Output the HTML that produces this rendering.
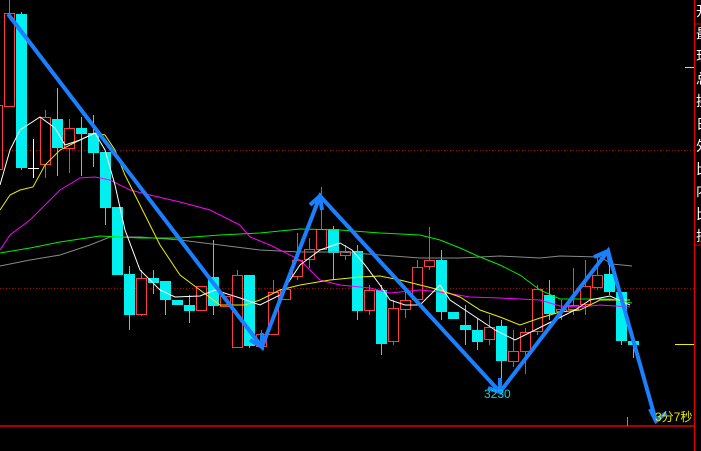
<!DOCTYPE html>
<html><head><meta charset="utf-8"><style>
html,body{margin:0;padding:0;background:#000;width:701px;height:451px;overflow:hidden}
svg{display:block}
.r{position:absolute;left:696px;width:5px;overflow:hidden;color:#fff;font:14px "Liberation Sans","Noto Sans CJK SC",sans-serif;line-height:22.5px}
</style></head><body>
<svg width="701" height="451" viewBox="0 0 701 451" xmlns="http://www.w3.org/2000/svg" style="position:absolute;left:0;top:0">
<rect width="701" height="451" fill="#000"/>
<line x1="0" y1="150.5" x2="694" y2="150.5" stroke="#a00" stroke-dasharray="1,2"/>
<line x1="0" y1="288.5" x2="694" y2="288.5" stroke="#a00" stroke-dasharray="1,2"/>
<line x1="694.5" y1="0" x2="694.5" y2="451" stroke="#d00" stroke-width="1.5"/>
<line x1="0" y1="426" x2="694" y2="426" stroke="#d00" stroke-width="1.5"/>
<line x1="694" y1="24" x2="701" y2="24" stroke="#d00"/>
<line x1="694" y1="245" x2="701" y2="245" stroke="#d00"/>
<line x1="685" y1="67.5" x2="694" y2="67.5" stroke="#ee0"/>
<line x1="675" y1="344.5" x2="694" y2="344.5" stroke="#ee0"/>
<line x1="627.5" y1="417" x2="627.5" y2="426" stroke="#888"/>
<g stroke="#00f0f0" stroke-width="1">
<line x1="21.5" y1="12" x2="21.5" y2="170"/><line x1="57.5" y1="88" x2="57.5" y2="176"/>
<line x1="81.5" y1="117" x2="81.5" y2="176"/><line x1="93.5" y1="115" x2="93.5" y2="167"/>
<line x1="105.5" y1="152" x2="105.5" y2="225"/><line x1="129.5" y1="266" x2="129.5" y2="330"/>
<line x1="153.5" y1="270" x2="153.5" y2="294"/><line x1="165.5" y1="282" x2="165.5" y2="315"/>
<line x1="189.5" y1="295" x2="189.5" y2="323"/><line x1="213.5" y1="240" x2="213.5" y2="315"/>
<line x1="249.5" y1="275" x2="249.5" y2="348"/><line x1="333.5" y1="226" x2="333.5" y2="280"/>
<line x1="357.5" y1="245" x2="357.5" y2="320"/><line x1="381.5" y1="285" x2="381.5" y2="355"/>
<line x1="441.5" y1="250" x2="441.5" y2="320"/><line x1="465.5" y1="305" x2="465.5" y2="345"/>
<line x1="477.5" y1="318" x2="477.5" y2="350"/><line x1="501.5" y1="320" x2="501.5" y2="380"/>
<line x1="549.5" y1="280" x2="549.5" y2="320"/><line x1="609.5" y1="250" x2="609.5" y2="295"/>
<line x1="621.5" y1="292" x2="621.5" y2="345"/><line x1="633.5" y1="340" x2="633.5" y2="358"/>
</g>
<g stroke="#ff3c3c" stroke-width="1">
<line x1="9.5" y1="0" x2="9.5" y2="13"/><line x1="45.5" y1="110" x2="45.5" y2="178"/>
<line x1="69.5" y1="119" x2="69.5" y2="173"/><line x1="141.5" y1="270" x2="141.5" y2="316"/>
<line x1="237.5" y1="270" x2="237.5" y2="348"/><line x1="261.5" y1="330" x2="261.5" y2="347"/>
<line x1="273.5" y1="280" x2="273.5" y2="335"/><line x1="297.5" y1="233" x2="297.5" y2="280"/>
<line x1="309.5" y1="238" x2="309.5" y2="268"/><line x1="321.5" y1="187" x2="321.5" y2="250"/>
<line x1="345.5" y1="245" x2="345.5" y2="260"/><line x1="369.5" y1="285" x2="369.5" y2="315"/>
<line x1="393.5" y1="300" x2="393.5" y2="345"/><line x1="405.5" y1="290" x2="405.5" y2="318"/>
<line x1="417.5" y1="260" x2="417.5" y2="302"/><line x1="429.5" y1="227" x2="429.5" y2="270"/>
<line x1="489.5" y1="315" x2="489.5" y2="345"/><line x1="513.5" y1="330" x2="513.5" y2="367"/>
<line x1="525.5" y1="328" x2="525.5" y2="374"/><line x1="537.5" y1="285" x2="537.5" y2="335"/>
<line x1="561.5" y1="300" x2="561.5" y2="320"/><line x1="573.5" y1="268" x2="573.5" y2="315"/>
<line x1="585.5" y1="260" x2="585.5" y2="315"/><line x1="597.5" y1="255" x2="597.5" y2="290"/>
</g>
<g fill="#00f0f0">
<rect x="16" y="14" width="11" height="154"/><rect x="52" y="119" width="11" height="29"/>
<rect x="76" y="128" width="11" height="6"/><rect x="88" y="133" width="11" height="20"/>
<rect x="100" y="152" width="11" height="56"/><rect x="112" y="207" width="11" height="68"/>
<rect x="124" y="274" width="11" height="41"/><rect x="148" y="278" width="11" height="5"/>
<rect x="160" y="281" width="11" height="19"/><rect x="172" y="300" width="11" height="5"/>
<rect x="184" y="305" width="11" height="6"/><rect x="208" y="277" width="11" height="29"/>
<rect x="244" y="275" width="11" height="71"/><rect x="328" y="229" width="11" height="24"/>
<rect x="352" y="251" width="11" height="60"/><rect x="376" y="290" width="11" height="54"/>
<rect x="436" y="260" width="11" height="52"/><rect x="448" y="312" width="11" height="7"/>
<rect x="460" y="325" width="11" height="5"/><rect x="472" y="330" width="11" height="12"/>
<rect x="496" y="326" width="11" height="35"/><rect x="544" y="295" width="11" height="19"/>
<rect x="604" y="274" width="11" height="18"/><rect x="616" y="292" width="11" height="49"/>
<rect x="628" y="341" width="11" height="4"/>
</g>
<g fill="#000" stroke="#ff3c3c" stroke-width="1">
<rect x="-3.5" y="105.5" width="6" height="64"/>
<rect x="4.5" y="13.5" width="10" height="93"/><rect x="40.5" y="117.5" width="10" height="47"/>
<rect x="64.5" y="128.5" width="10" height="20"/><rect x="136.5" y="278.5" width="10" height="36"/>
<rect x="196.5" y="286.5" width="10" height="24"/><rect x="220.5" y="296.5" width="10" height="10"/>
<rect x="232.5" y="275.5" width="10" height="72"/><rect x="256.5" y="334.5" width="10" height="12"/>
<rect x="268.5" y="292.5" width="10" height="42"/><rect x="280.5" y="289.5" width="10" height="10"/>
<rect x="292.5" y="260.5" width="10" height="16"/><rect x="304.5" y="249.5" width="10" height="10"/>
<rect x="316.5" y="229.5" width="10" height="20"/><rect x="340.5" y="251.5" width="10" height="4"/>
<rect x="364.5" y="290.5" width="10" height="20"/><rect x="388.5" y="308.5" width="10" height="33"/>
<rect x="400.5" y="300.5" width="10" height="9"/><rect x="412.5" y="267.5" width="10" height="32"/>
<rect x="424.5" y="260.5" width="10" height="6"/><rect x="484.5" y="327.5" width="10" height="12"/>
<rect x="508.5" y="351.5" width="10" height="10"/><rect x="520.5" y="332.5" width="10" height="19"/>
<rect x="532.5" y="289.5" width="10" height="42"/><rect x="556.5" y="309.5" width="10" height="2"/>
<rect x="568.5" y="305.5" width="10" height="4"/><rect x="580.5" y="286.5" width="10" height="18"/>
<rect x="592.5" y="275.5" width="10" height="12"/>
</g>
<line x1="33.5" y1="139" x2="33.5" y2="178" stroke="#fff"/><line x1="28" y1="168.5" x2="39" y2="168.5" stroke="#fff"/>
<g fill="none" stroke-width="1">
<polyline stroke="#888" points="0,266 30,260 60,255 90,245 110,237 140,237 180,240 220,245 260,250 300,252 340,252 380,255 420,258 460,258 500,256 540,258 560,256 600,257 612,264 632,266"/>
<polyline stroke="#0e0" points="0,253 30,248 60,242 100,236 140,238 180,238 220,235 260,233 300,229 340,230 380,233 420,235 440,240 460,248 480,257 500,265 520,275 540,290 560,299 580,299 610,299 632,303"/>
<polyline stroke="#f0f" points="0,250 10,235 30,220 45,205 60,190 80,178 95,177 110,180 130,190 150,195 180,202 210,210 240,225 250,237 270,245 300,260 320,280 340,285 370,288 390,293 420,290 440,292 470,297 500,298 540,300 560,306 580,307 600,305 630,307"/>
<polyline stroke="#ee0" points="0,210 10,195 20,190 33,187 45,165 60,150 80,140 95,133 105,135 115,150 125,175 140,205 160,245 180,275 200,290 220,305 245,305 260,300 280,290 300,285 330,280 360,277 380,276 400,280 420,285 440,290 460,297 480,310 500,317 520,325 540,318 560,312 580,310 600,300 630,300"/>
<polyline stroke="#fff" points="0,185 10,150 20,130 40,117 55,128 65,145 80,140 95,133 105,150 115,185 125,230 140,270 160,290 175,297 200,296 215,290 240,298 260,305 280,295 300,265 320,250 340,243 352,250 365,265 380,285 390,300 405,305 420,305 440,285 450,300 465,310 480,320 495,330 515,340 535,330 555,320 575,310 590,300 610,296 630,305"/>
</g>
<g stroke="#1a80ff" stroke-width="4" fill="none" stroke-linejoin="miter">
<polyline points="8,14 262,347 320,196 500,392 608,251 656,421"/>
<polyline points="250,340 262,347 262,333"/>
<polyline points="310,205 320,196 322,210"/>
<polyline points="488,388 500,392 500,378"/>
<polyline points="594,257 608,251 610,265"/>
<polyline points="650,409 656,421 666,413"/>
</g>
<text x="484" y="398" fill="#00d8e0" font-family="Liberation Sans,sans-serif" font-size="12">3230</text>
<text x="655" y="421" fill="#e8e800" font-family="Liberation Sans,Noto Sans CJK SC,sans-serif" font-size="12">3分7秒</text>
</svg>
<div class="r" style="top:0">开<br>最<br>现<br>总<br>换<br>日<br>外<br>比<br>内<br>比<br>振</div>
</body></html>
